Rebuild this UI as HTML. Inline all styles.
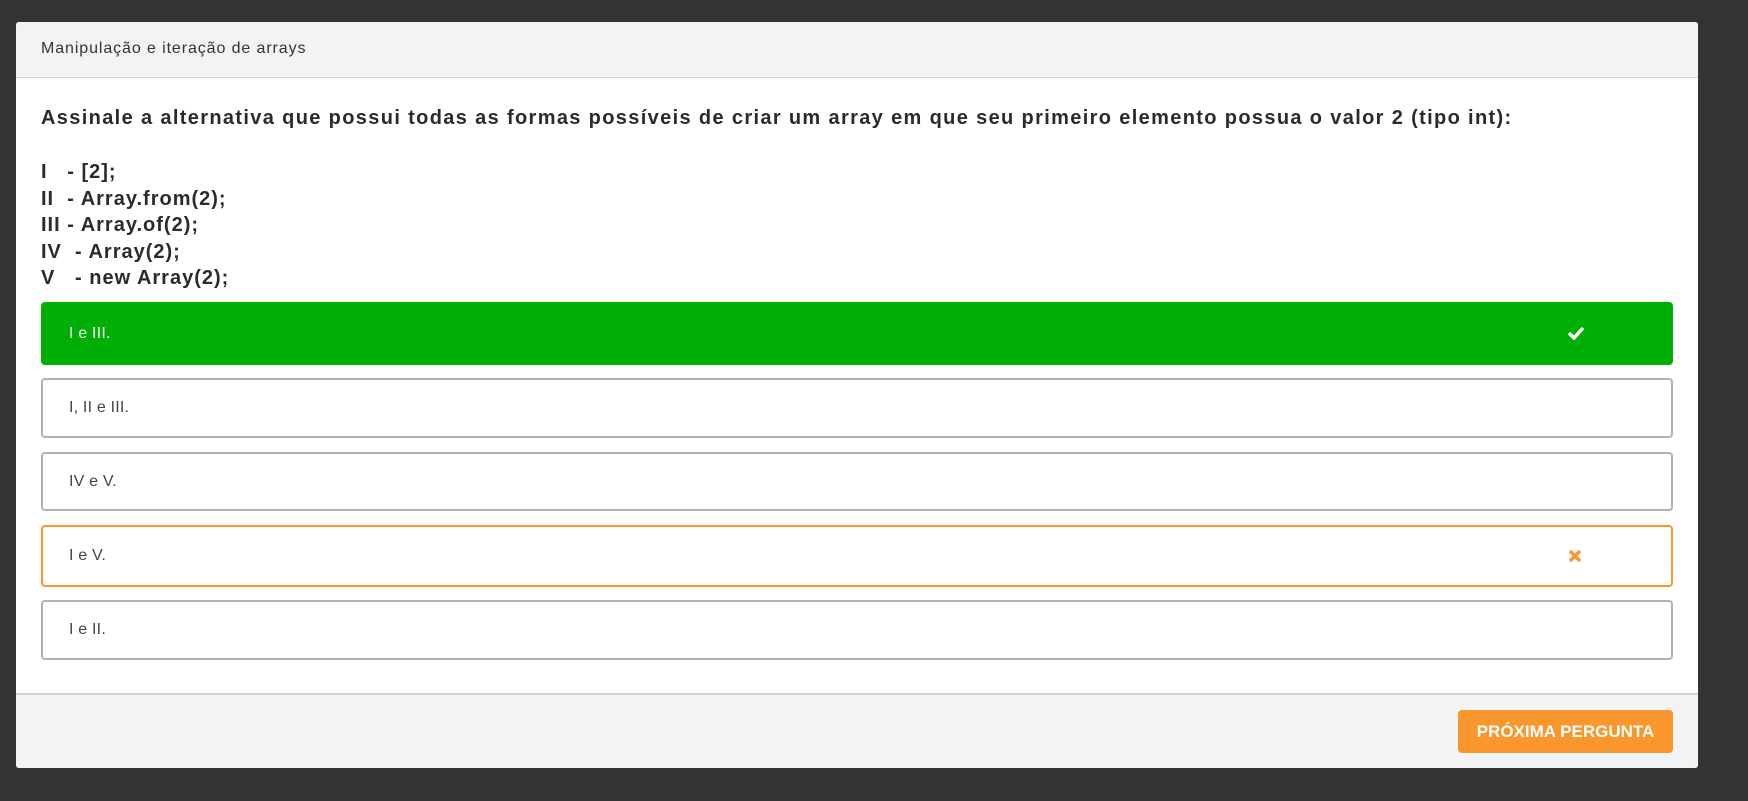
<!DOCTYPE html>
<html><head><meta charset="utf-8"><style>
*{box-sizing:border-box;margin:0;padding:0}
body{width:1748px;height:801px;background:#333;font-family:"Liberation Sans",sans-serif;position:relative;overflow:hidden}
.card{position:absolute;left:16px;top:22px;width:1682px;height:746px;background:#fff;border-radius:3px;overflow:hidden}
.hd{height:56px;background:#f2f3f5;border-bottom:1px solid #d0d4d8;padding-left:25px;line-height:54px;font-size:16px;color:#333;letter-spacing:0.9px}
.q{position:absolute;left:25px;top:85px;font-size:20px;font-weight:bold;color:#2b2b2b;letter-spacing:1.35px;white-space:nowrap}
.l{position:absolute;left:25px;font-size:20px;font-weight:bold;color:#2b2b2b;line-height:26.5px;letter-spacing:1px}
.opt{position:absolute;left:25px;width:1632px;border:2px solid #aab2ba;border-radius:4px;font-size:16px;color:#444;padding-left:26px;display:flex;align-items:center;letter-spacing:0.2px}
.ft{position:absolute;left:0;top:671px;width:100%;height:75px;background:#f2f3f5;border-top:2px solid #d0d4d8}
.btn{position:absolute;left:1442px;top:688px;width:215px;height:43px;background:#f9972d;border-radius:4px;color:#fff;font-weight:bold;font-size:17px;display:flex;align-items:center;justify-content:center}
</style></head><body>
<div class="card">
<div class="hd">Manipulação e iteração de arrays</div>
<div class="q">Assinale a alternativa que possui todas as formas possíveis de criar um array em que seu primeiro elemento possua o valor 2 (tipo int):</div>
<div class="l" style="top:137px">I &nbsp; - [2];<br>II &nbsp;- Array.from(2);<br>III - Array.of(2);<br>IV &nbsp;- Array(2);<br>V &nbsp; - new Array(2);</div>
<div class="opt" style="top:280px;height:63px;background:#00af05;border-color:#00af05;color:#fff">I e III.
<svg style="position:absolute;left:1524px;top:22px" width="18" height="14" viewBox="0 0 18 14"><path d="M2 7l5 5L16 2" stroke="#fff" stroke-width="3.5" fill="none"/></svg></div>
<div class="opt" style="top:356px;height:60px">I, II e III.</div>
<div class="opt" style="top:430px;height:59px">IV e V.</div>
<div class="opt" style="top:503px;height:62px;border-color:#f9972d">I e V.
<svg style="position:absolute;left:1525px;top:22px" width="14" height="14" viewBox="0 0 14 14"><path d="M2 2l10 10M12 2L2 12" stroke="#f9972d" stroke-width="3.5" fill="none"/></svg></div>
<div class="opt" style="top:578px;height:60px">I e II.</div>
<div class="ft"></div>
<div class="btn">PRÓXIMA PERGUNTA</div>
</div>
</body></html>
